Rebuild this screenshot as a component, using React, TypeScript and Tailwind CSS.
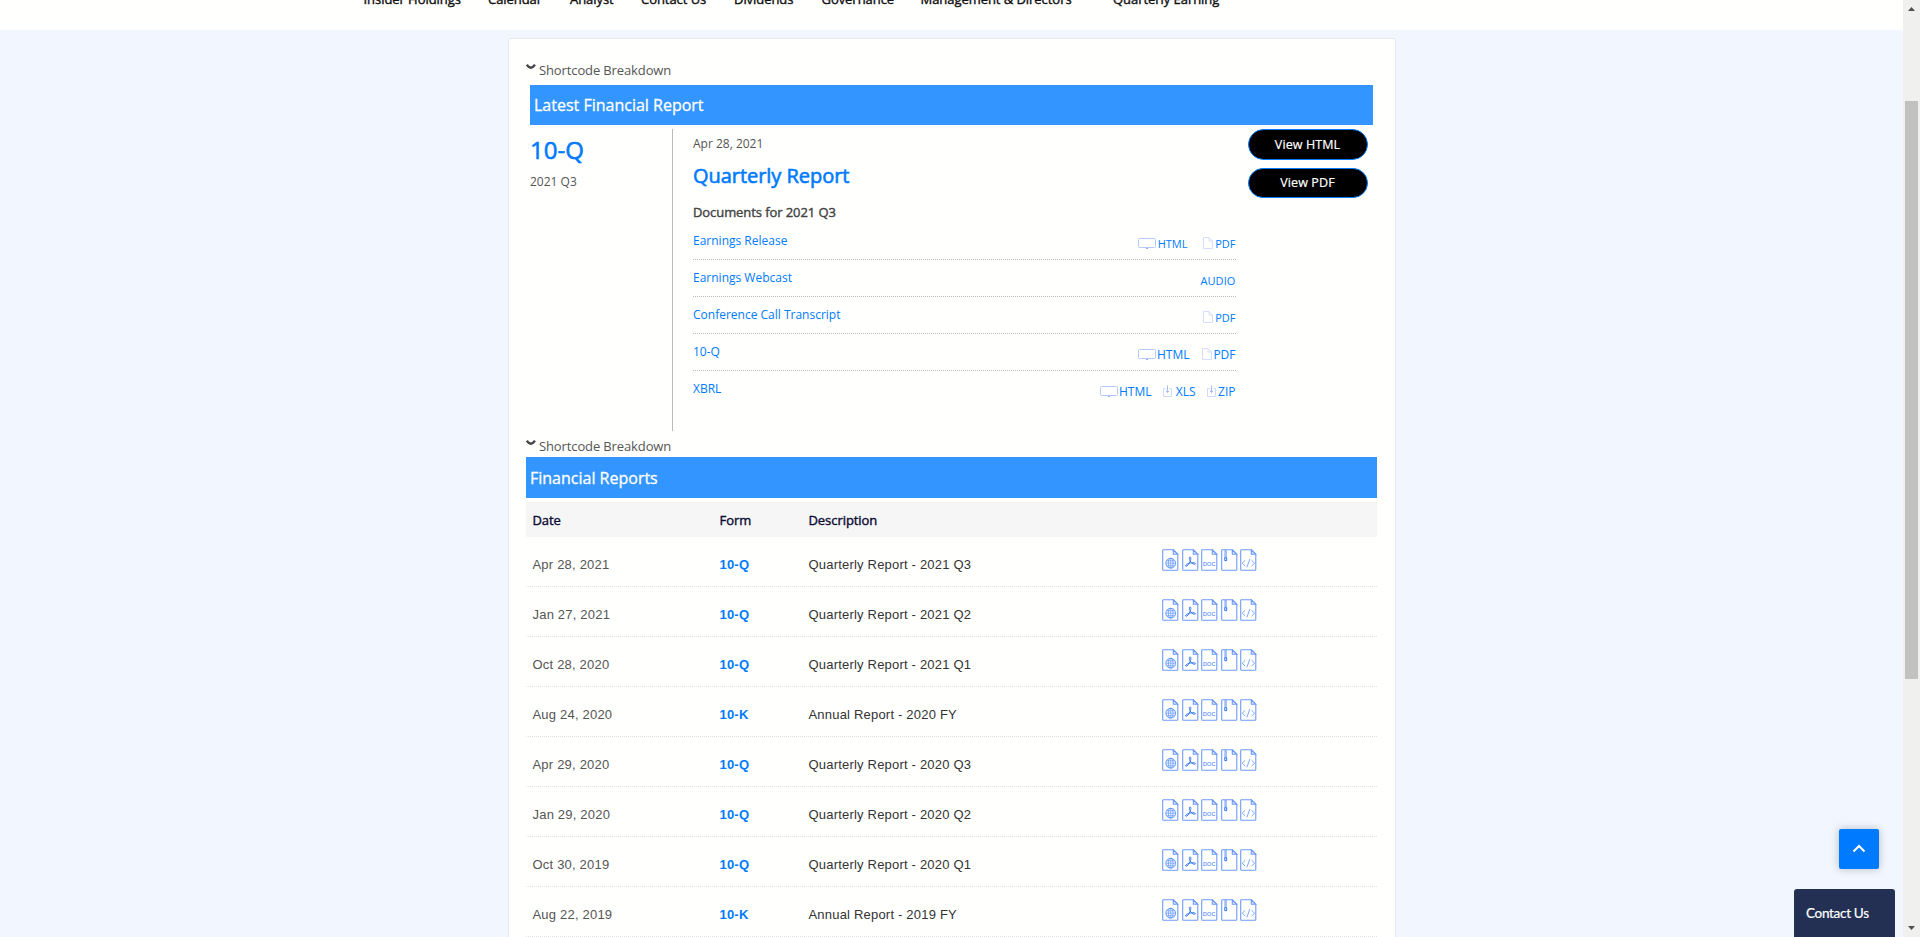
import React from 'react';

const nav = [
  { label: 'Insider Holdings', cls: 'w-[124.5px]' },
  { label: 'Calendar', cls: 'w-[82px]' },
  { label: 'Analyst', cls: 'w-[71px]' },
  { label: 'Contact Us', cls: 'w-[93px]' },
  { label: 'Dividends', cls: 'w-[87.5px]' },
  { label: 'Governance', cls: 'w-[99px]' },
  { label: 'Management & Directors', cls: 'w-[192.5px]' },
  { label: 'Quarterly Earning', cls: 'w-[130px]' },
];

type Kind = 'html' | 'pdf' | 'audio' | 'dl';
const docs: { name: string; links: { kind: Kind; label: string; cls: string }[] }[] = [
  {
    name: 'Earnings Release',
    links: [
      { kind: 'html', label: 'HTML', cls: 'w-[50px] text-[11px]' },
      { kind: 'pdf', label: 'PDF', cls: 'ml-[15px] w-[33px] text-[11px]' },
    ],
  },
  { name: 'Earnings Webcast', links: [{ kind: 'audio', label: 'AUDIO', cls: 'text-[11px] tracking-[0.1px]' }] },
  { name: 'Conference Call Transcript', links: [{ kind: 'pdf', label: 'PDF', cls: 'w-[33px] text-[11px]' }] },
  {
    name: '10-Q',
    links: [
      { kind: 'html', label: 'HTML', cls: 'w-[52px] text-[12px]' },
      { kind: 'pdf', label: 'PDF', cls: 'ml-[12px] w-[34px] text-[12px]' },
    ],
  },
  {
    name: 'XBRL',
    links: [
      { kind: 'html', label: 'HTML', cls: 'w-[52px] text-[12px]' },
      { kind: 'dl', label: 'XLS', cls: 'ml-[11px] w-[33px] text-[12px]' },
      { kind: 'dl', label: 'ZIP', cls: 'ml-[11px] w-[29px] text-[12px]' },
    ],
  },
];

const reports = [
  ['Apr 28, 2021', '10-Q', 'Quarterly Report - 2021 Q3'],
  ['Jan 27, 2021', '10-Q', 'Quarterly Report - 2021 Q2'],
  ['Oct 28, 2020', '10-Q', 'Quarterly Report - 2021 Q1'],
  ['Aug 24, 2020', '10-K', 'Annual Report - 2020 FY'],
  ['Apr 29, 2020', '10-Q', 'Quarterly Report - 2020 Q3'],
  ['Jan 29, 2020', '10-Q', 'Quarterly Report - 2020 Q2'],
  ['Oct 30, 2019', '10-Q', 'Quarterly Report - 2020 Q1'],
  ['Aug 22, 2019', '10-K', 'Annual Report - 2019 FY'],
];

function DocIcon({ kind }: { kind: Kind }) {
  if (kind === 'html')
    return (
      <svg width="18" height="12" viewBox="0 0 18 12" fill="none" stroke="#b5c9fb" className="shrink-0">
        <rect x=".5" y="1.5" width="17" height="9" rx="1" />
        <path d="M8 11.500h2" stroke="#8faef8" />
      </svg>
    );
  if (kind === 'pdf')
    return (
      <svg width="10" height="12" viewBox="0 0 10 12" fill="none" stroke="#d6defb" className="shrink-0">
        <path d="M.5.5h5.500l3.500 3.500v7.500h-9zM6 .5v3.500h3.500" />
      </svg>
    );
  if (kind === 'dl')
    return (
      <svg width="9" height="12" viewBox="0 0 9 12" fill="none" stroke="#d0d9fb" className="shrink-0">
        <path d="M2.500 3.500h-2v8h8v-8h-2" />
        <path d="M4.500 .5v7M3 6l1.500 1.500 1.500-1.500" stroke="#a5bbf8" />
      </svg>
    );
  return null;
}

function FileIcon({ kind }: { kind: number }) {
  return (
    <svg width="17" height="22" viewBox="0 0 17 22" fill="none" stroke="#6f9bfb" strokeWidth="1.100" className="shrink-0">
      <path d="M1.500.7h9.800l4.500 4.600v15.200q0 .8-.8.8h-13.500q-.8 0-.8-.8v-19q0-.8.8-.8z" />
      <path d="M11.300.8v4.500h4.500z" fill="#dbe6ff" />
      {kind === 0 && (
        <g stroke="#4a86fb" strokeWidth=".8">
          <circle cx="8.700" cy="14.200" r="4.900" fill="#edf3ff" />
          <ellipse cx="8.700" cy="14.200" rx="2.300" ry="4.900" strokeWidth=".6" />
          <path d="M8.700 9.400v9.600M3.900 14.200h9.600M4.700 11.700h8M4.700 16.700h8" strokeWidth=".5" />
        </g>
      )}
      {kind === 1 && (
        <path
          d="M8 8c1.500 0 .7 3-.1 4.900-.8 2-2.700 4.600-3.900 4.400-1.300-.4.400-2.300 2.900-3 2.400-.7 6.500-.9 6.500.4s-3.100.3-4.500-1.500C7.600 11.600 6.700 8 8 8z"
          stroke="#3577f6"
          strokeWidth="1"
        />
      )}
      {kind === 2 && (
        <text x="8.300" y="17.400" textAnchor="middle" textLength="12.500" lengthAdjust="spacingAndGlyphs" fontSize="6.200" fill="#5b8ff9" stroke="#5b8ff9" strokeWidth=".15" className="font-['Liberation_Sans',sans-serif]">
          DOC
        </text>
      )}
      {kind === 3 && (
        <g stroke="#3d7dfb">
          <path d="M4.600 1.500v7" strokeDasharray="1 1" strokeWidth="2.600" />
          <rect x="3.700" y="8.500" width="2" height="3.200" rx="1" />
        </g>
      )}
      {kind === 4 && <path d="M5.200 11.300l-3 2.900 3 2.900M11.600 11.300l3 2.900-3 2.900M9.900 10l-3 8.300" strokeWidth=".9" />}
    </svg>
  );
}

function Breakdown() {
  return (
    <div className="flex h-[18px] text-[13px] leading-[16px] tracking-[-0.12px] text-[#555]">
      <svg width="10" height="8" viewBox="0 0 10 8" fill="none" stroke="#484848" strokeWidth="2.400" className="mt-px mr-[3px] shrink-0">
        <path d="M.7 1.700Q2.500 4.600 4.800 4.800 7.200 4.600 9 1.700" />
      </svg>
      <span>Shortcode Breakdown</span>
    </div>
  );
}

export default function App() {
  return (
    <div className="flex h-[937px] w-[1920px] overflow-hidden bg-[#f2f7ff] font-['Open_Sans','Noto_Sans',sans-serif] whitespace-nowrap">
      <div className="flex w-[1903px] flex-col">
        <header className="flex h-[30px] shrink-0 overflow-hidden bg-[#fffffe] pl-[363.5px]">
          {nav.map((n) => (
            <a key={n.label} className={`-mt-[11px] h-[20px] shrink-0 text-[13px] leading-[20px] tracking-[-0.05px] text-[#111] [-webkit-text-stroke:0.4px_#111] ${n.cls}`}>
              {n.label}
            </a>
          ))}
        </header>

        <main className="mt-[8px] ml-[508px] flex h-[920px] w-[888px] shrink-0 flex-col rounded-[3px] border border-[#e4e7ec] bg-[#fffffe] px-[17px] pt-[23px]">
          <div className="h-[23px]">
            <Breakdown />
          </div>

          <section className="mx-[4px] w-[843px]">
            <h2 className="h-[40px] bg-[#3395ff] pl-[4px] text-[16px] leading-[40px] text-white [-webkit-text-stroke:0.3px_white]">
              Latest Financial Report
            </h2>
            <div className="mt-[4px] flex h-[302px]">
              <div className="w-[142px] pt-[4px]">
                <div className="h-[36px] text-[24px] leading-[33px] text-[#007bff] [-webkit-text-stroke:0.6px_#007bff]">10-Q</div>
                <div className="h-[24px] text-[12px] leading-[26px] text-[#555]">2021 Q3</div>
              </div>
              <div className="w-[564px] border-l border-[#bbb] pl-[20px]">
                <div className="h-[30px] text-[12px] leading-[30px] text-[#555]">Apr 28, 2021</div>
                <div className="h-[34px] text-[20px] leading-[34px] tracking-[-0.04px] text-[#007bff] [-webkit-text-stroke:0.6px_#007bff]">Quarterly Report</div>
                <div className="h-[30px] pt-[7px] text-[13px] leading-[25px] tracking-[-0.08px] text-[#444] [-webkit-text-stroke:0.4px_#444]">Documents for 2021 Q3</div>
                <div>
                  {docs.map((d) => (
                    <div key={d.name} className="flex h-[37px] items-start justify-between border-b border-dotted border-[#bbb] pt-[8px] text-[12px] leading-[20px] text-[#007bff] last:border-b-0">
                      <a>{d.name}</a>
                      <div className="flex pt-[4px]">
                        {d.links.map((l) => (
                          <a key={l.label} className={`flex items-center leading-[18px] ${l.cls}`}>
                            <span className="-mt-[2px]">
                              <DocIcon kind={l.kind} />
                            </span>
                            <span className="mr-[0.5px] ml-auto">{l.label}</span>
                          </a>
                        ))}
                      </div>
                    </div>
                  ))}
                </div>
              </div>
              <div className="ml-[12px] flex w-[120px] flex-col gap-[8px]">
                <button className="h-[31px] rounded-full border border-[#007bff] bg-black pr-px text-[12.500px] leading-[28px] tracking-[0.1px] text-white [-webkit-text-stroke:0.2px_white]">View HTML</button>
                <button className="h-[30px] rounded-full border border-[#007bff] bg-black pr-px text-[12.500px] leading-[28px] tracking-[0.1px] text-white [-webkit-text-stroke:0.2px_white]">View PDF</button>
              </div>
            </div>
          </section>

          <div className="mt-[7px] h-[19px]">
            <Breakdown />
          </div>

          <section className="w-[851px]">
            <h2 className="h-[41px] bg-[#3395ff] pl-[4px] text-[16px] leading-[42px] text-white [-webkit-text-stroke:0.3px_white]">Financial Reports</h2>
            <div className="mt-[4px] flex h-[35px] bg-[#f6f6f6] pl-[6.500px] text-[13px] leading-[36px] tracking-[-0.06px] text-[#0b0b33] [-webkit-text-stroke:0.4px_#0b0b33]">
              <span className="w-[187px]">Date</span>
              <span className="w-[89px]">Form</span>
              <span>Description</span>
            </div>
            {reports.map((r) => (
              <div key={r[0]} className="flex h-[50px] border-b border-dotted border-[#e2e2e2] pl-[6.500px] font-['Liberation_Sans',sans-serif] text-[13px] leading-[55px] tracking-[0.2px] text-[#333]">
                <span className="w-[187px] text-[#555]">{r[0]}</span>
                <span className="w-[89px] font-bold tracking-[0.2px] text-[#007bff]">{r[1]}</span>
                <span className="w-[353.500px]">{r[2]}</span>
                <span className="flex gap-[2.500px] pt-[11.500px]">
                  {[0, 1, 2, 3, 4].map((k) => (
                    <FileIcon key={k} kind={k} />
                  ))}
                </span>
              </div>
            ))}
          </section>
        </main>
      </div>

      <div className="flex w-[17px] flex-col items-center bg-[#f0f0ef]">
        <svg width="7" height="4" viewBox="0 0 7 4" className="mt-[7px] shrink-0" fill="#505050">
          <path d="M0 4L3.500 0 7 4z" />
        </svg>
        <div className="mt-[90px] h-[578px] w-[13px] shrink-0 bg-[#c1c1c0]" />
        <svg width="7" height="4" viewBox="0 0 7 4" className="mt-auto mb-[7px] shrink-0" fill="#505050">
          <path d="M0 0L3.500 4 7 0z" />
        </svg>
      </div>

      <button className="absolute top-[829px] left-[1839px] flex h-[40px] w-[40px] items-center justify-center rounded-[2px] bg-[#007bff] shadow-[0_0_8px_rgba(0,0,0,0.25)]">
        <svg width="14" height="9" viewBox="0 0 14 9" fill="none" stroke="white" strokeWidth="2" className="-mt-[2px]">
          <path d="M1.500 7.500L7 2l5.500 5.500" />
        </svg>
      </button>
      <div className="absolute top-[889px] left-[1794px] h-[48px] w-[101px] rounded-t-[3px] bg-[#233053] pl-[12px] font-['Lato',sans-serif] text-[13.500px] leading-[48px] tracking-[-0.3px] text-white [-webkit-text-stroke:0.2px_white]">
        Contact Us
      </div>
    </div>
  );
}
